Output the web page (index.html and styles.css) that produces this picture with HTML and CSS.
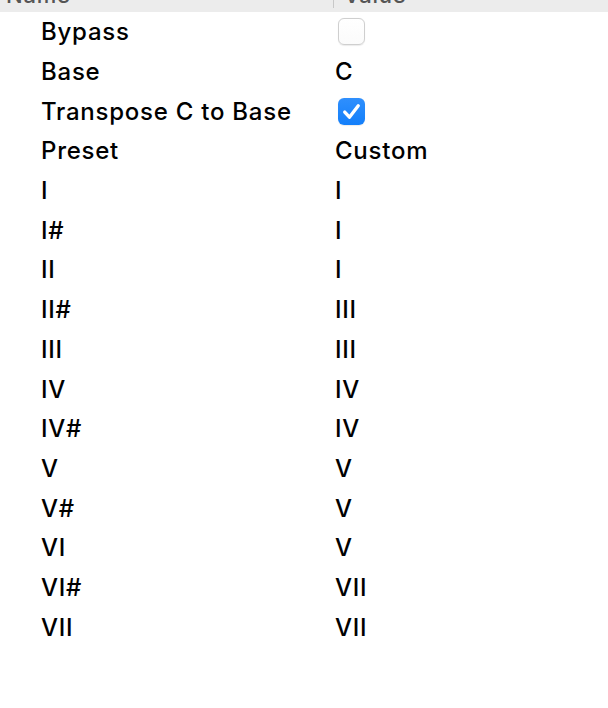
FILE: index.html
```html
<!DOCTYPE html>
<html>
<head>
<meta charset="utf-8">
<link rel="stylesheet" href="styles.css">
</head>
<body>
<div class="header">
  <div class="hcell name-h"><span class="hlabel">Name</span></div>
  <div class="hcell value-h"><span class="hlabel">Value</span></div>
</div>
<div class="rows">
  <div class="row"><div class="name">Bypass</div><div class="value"><span class="cb"></span></div></div>
  <div class="row"><div class="name">Base</div><div class="value">C</div></div>
  <div class="row"><div class="name">Transpose C to Base</div><div class="value"><span class="cb checked"><svg viewBox="0 0 26 26" width="26" height="26"><path d="M6.5 13.5 L11 18.5 L19.5 7.5" fill="none" stroke="#fff" stroke-width="3.2" stroke-linecap="round" stroke-linejoin="round"/></svg></span></div></div>
  <div class="row"><div class="name">Preset</div><div class="value">Custom</div></div>
  <div class="row"><div class="name">I</div><div class="value">I</div></div>
  <div class="row"><div class="name">I#</div><div class="value">I</div></div>
  <div class="row"><div class="name">II</div><div class="value">I</div></div>
  <div class="row"><div class="name">II#</div><div class="value">III</div></div>
  <div class="row"><div class="name">III</div><div class="value">III</div></div>
  <div class="row"><div class="name">IV</div><div class="value">IV</div></div>
  <div class="row"><div class="name">IV#</div><div class="value">IV</div></div>
  <div class="row"><div class="name">V</div><div class="value">V</div></div>
  <div class="row"><div class="name">V#</div><div class="value">V</div></div>
  <div class="row"><div class="name">VI</div><div class="value">V</div></div>
  <div class="row"><div class="name">VI#</div><div class="value">VII</div></div>
  <div class="row"><div class="name">VII</div><div class="value">VII</div></div>
</div>
</body>
</html>
```
FILE: styles.css
```css
html, body {
  margin: 0;
  padding: 0;
  background: #fff;
}
body {
  font-family: Inter, "Liberation Sans", sans-serif;
  font-size: 24px;
  font-weight: 500;
  letter-spacing: 0.75px;
  color: #000;
}
.header {
  display: grid;
  grid-template-columns: 333px 1fr;
  height: 12px;
  background: #ececec;
  overflow: hidden;
}
.hcell {
  height: 12px;
  overflow: hidden;
}
.value-h {
  border-left: 1px solid #c8c8c8;
  height: 8px;
}
.hlabel {
  display: block;
  margin-top: -15px;
  line-height: 20px;
  color: #555;
  font-size: 22px;
}
.name-h .hlabel { padding-left: 6px; }
.value-h .hlabel { padding-left: 10px; }
.rows {
  display: flex;
  flex-direction: column;
}
.row {
  display: grid;
  grid-template-columns: 335px 1fr;
  height: 39.7px;
  align-items: center;
}
.name {
  padding-left: 41px;
}
.value {
  display: flex;
  align-items: center;
}
.cb {
  display: block;
  width: 27px;
  height: 27px;
  box-sizing: border-box;
  margin-left: 3px;
  border-radius: 6px;
  border: 1px solid #cfcfcf;
  background: linear-gradient(#ffffff, #fbfbfb);
  box-shadow: 0 0.5px 1px rgba(0,0,0,0.08);
}
.cb.checked {
  border: none;
  background: linear-gradient(#2f8ffd, #137ffa);
}
.cb svg { display: block; width: 27px; height: 27px; }
```
